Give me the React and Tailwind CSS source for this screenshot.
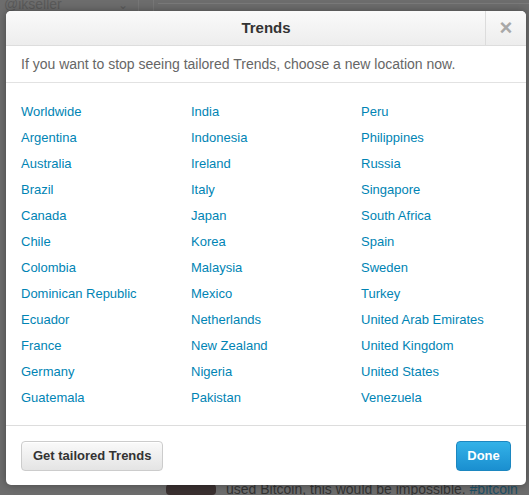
import React from 'react';

const columns = [
  ['Worldwide', 'Argentina', 'Australia', 'Brazil', 'Canada', 'Chile', 'Colombia', 'Dominican Republic', 'Ecuador', 'France', 'Germany', 'Guatemala'],
  ['India', 'Indonesia', 'Ireland', 'Italy', 'Japan', 'Korea', 'Malaysia', 'Mexico', 'Netherlands', 'New Zealand', 'Nigeria', 'Pakistan'],
  ['Peru', 'Philippines', 'Russia', 'Singapore', 'South Africa', 'Spain', 'Sweden', 'Turkey', 'United Arab Emirates', 'United Kingdom', 'United States', 'Venezuela'],
];

export default function App() {
  return (
    <div
      className="relative h-[495px] w-[529px] overflow-hidden bg-[#6d6d6d]"
      style={{ fontFamily: '"Liberation Sans", Arial, sans-serif' }}
    >
      {/* dimmed page behind the dialog */}
      <div className="absolute left-[4px] top-[-6px] text-[14px] text-[#5a5a5a]">@ikseller</div>
      <div className="absolute left-[118px] top-[-4px] text-[12px] text-[#5a5a5a]">⌄</div>
      <div className="absolute left-[138px] top-0 h-[11px] w-px bg-[#777]" />
      <div className="absolute left-[153px] top-0 h-[11px] w-px bg-[#777]" />
      <div className="absolute left-[158px] top-[3px] h-px w-[371px] bg-[#7a7a7a]" />
      <div className="absolute left-[166px] top-[484px] h-[11px] w-[50px] rounded-sm bg-[#3a3030]" />
      <div className="absolute left-[226px] top-[479px] whitespace-nowrap text-[14px] text-[#333]">
        used Bitcoin, this would be impossible. <span className="text-[#1d4f66]">#bitcoin</span>
      </div>

      <div className="absolute left-[6px] top-[11px] flex h-[474px] w-[520px] flex-col overflow-hidden rounded-[5px] bg-white shadow-[0_0_8px_rgba(0,0,0,0.35)]">
        <div className="flex h-[35px] shrink-0 items-stretch border-b border-[#dddddd] bg-gradient-to-b from-[#fafafa] to-[#ededed]">
          <div className="flex flex-1 items-center justify-center pl-[41px] text-[15px] font-bold text-[#333]">Trends</div>
          <div className="flex w-[41px] items-center justify-center border-l border-[#dcdcdc] text-[22px] font-bold leading-none text-[#a8a8a8]">
            ×
          </div>
        </div>

        <div className="flex h-[37px] shrink-0 items-center border-b border-[#e2e2e2] px-[15px] text-[14px] text-[#666]">
          If you want to stop seeing tailored Trends, choose a new location now.
        </div>

        <div className="flex shrink-0 border-b border-[#dddddd] px-[15px] pb-[14px] pt-[16px]">
          {columns.map((col, i) => (
            <div key={i} className="flex w-[170px] shrink-0 flex-col">
              {col.map((name) => (
                <a key={name} className="block text-[13px] leading-[26px] text-[#0084b4]">
                  {name}
                </a>
              ))}
            </div>
          ))}
        </div>

        <div className="flex flex-1 items-center justify-between px-[15px]">
          <button className="h-[30px] rounded-[4px] border border-[#cccccc] bg-gradient-to-b from-[#fafafa] to-[#e4e4e4] px-[11px] text-[13px] font-bold text-[#333] shadow-[inset_0_1px_0_#fff]">
            Get tailored Trends
          </button>
          <button className="h-[30px] w-[55px] rounded-[4px] border border-[#1c87c0] bg-gradient-to-b from-[#33b2e8] to-[#1a8fd0] text-[13px] font-bold text-white">
            Done
          </button>
        </div>
      </div>
    </div>
  );
}
